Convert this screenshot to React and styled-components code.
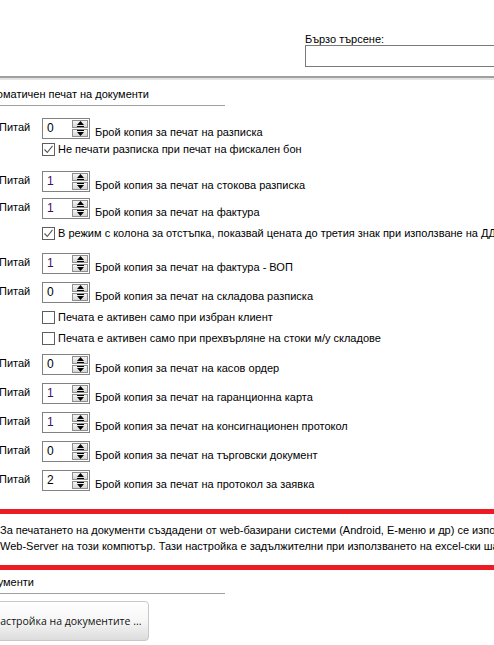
import React from 'react';
import styled, { createGlobalStyle } from 'styled-components';

const GlobalStyle = createGlobalStyle`
  html, body {
    margin: 0;
    padding: 0;
    background: #fff;
    overflow: hidden;
  }
  body {
    font-family: "Liberation Sans", Arial, sans-serif;
    font-size: 11px;
    color: #000;
  }
`;

const Page = styled.div`
  width: 494px;
  height: 645px;
  overflow: hidden;
`;

const Header = styled.div`
  display: flex;
  padding: 33px 0 9px 305px;
`;

const SearchBox = styled.div`
  display: flex;
  flex-direction: column;
  flex-shrink: 0;
  label {
    line-height: 12px;
    height: 12px;
  }
`;

const SearchInput = styled.input`
  width: 240px;
  height: 22px;
  box-sizing: border-box;
  border: 1px solid #7a7a7a;
  margin: 0;
  padding: 0 4px;
  font: inherit;
`;

const Rule = styled.div`
  height: 2px;
  background: #a0a0a0;
  border-bottom: 2px solid #e4e4e4;
`;

const Content = styled.div`
  margin-left: -21px;
`;

const Legend = styled.div`
  width: 246px;
  border-bottom: 1px solid #a0a0a0;
  padding: ${p => p.$top}px 0 4px 0;
  line-height: 13px;
  white-space: nowrap;
`;

const Row = styled.div`
  display: flex;
  align-items: flex-start;
  margin-top: ${p => p.$gap}px;
  height: 21px;
`;

const Ask = styled.span`
  width: 43px;
  padding-left: 20px;
  padding-top: 3px;
  line-height: 13px;
  flex-shrink: 0;
`;

const Spin = styled.div`
  position: relative;
  width: 48px;
  height: 21px;
  box-sizing: border-box;
  border: 1px solid #828282;
  background: #fff;
  flex-shrink: 0;
  display: flex;
  align-items: center;
`;

const SpinValue = styled.span`
  padding-left: 4px;
  line-height: 13px;
  font-size: 12px;
  color: ${p => (p.$purple ? '#3a1262' : '#000')};
`;

const SpinButtons = styled.div`
  position: absolute;
  right: 1px;
  top: 1px;
  bottom: 1px;
  width: 16px;
  display: flex;
  flex-direction: column;
  gap: 1px;
`;

const SpinBtn = styled.div`
  flex: 1;
  background: linear-gradient(#f4f4f4, #d6d6d6);
  border: 1px solid #8e8e8e;
  box-sizing: border-box;
  display: flex;
  align-items: center;
  justify-content: center;
`;

const RowLabel = styled.span`
  margin-left: 5px;
  padding-top: 8px;
  line-height: 13px;
  white-space: nowrap;
`;

const CheckRow = styled.label`
  display: flex;
  align-items: center;
  margin: ${p => p.$gap}px 0 0 63px;
  height: 14px;
  white-space: nowrap;
`;

const Box = styled.span`
  width: 13px;
  height: 13px;
  box-sizing: border-box;
  border: 1px solid #5e5e5e;
  background: #fff;
  margin-right: 3px;
  display: flex;
  align-items: center;
  justify-content: center;
  flex-shrink: 0;
`;

const RedNote = styled.div`
  margin-top: ${p => p.$gap}px;
  border-top: 5px solid #ed1c24;
  border-bottom: 5px solid #ed1c24;
  padding: 8px 0 11px 21px;
  line-height: 16px;
  white-space: nowrap;
`;

const ActionButton = styled.button`
  margin-top: 7px;
  width: 170px;
  height: 40px;
  border: 1px solid #c8c8c8;
  border-radius: 4px;
  background: linear-gradient(#ffffff 0%, #f6f6f6 50%, #dcdcdc 100%);
  font-family: "Open Sans", "Liberation Sans", sans-serif;
  font-size: 10.5px;
  color: #111;
  padding: 0 0 0 6px;
  white-space: nowrap;
`;

const Up = () => (
  <svg width="9" height="6" viewBox="0 0 9 6">
    <path d="M4.5 0 L8 4 L1 4 Z" fill="#000" />
    <rect x="1" y="5" width="7" height="1" fill="#000" />
  </svg>
);

const Down = () => (
  <svg width="9" height="6" viewBox="0 0 9 6">
    <rect x="1" y="0" width="7" height="1" fill="#000" />
    <path d="M1 2 L8 2 L4.5 6 Z" fill="#000" />
  </svg>
);

const Tick = () => (
  <svg width="11" height="11" viewBox="0 0 11 11">
    <path d="M1.5 5.5 L4.3 8.5 L9.5 1.8" fill="none" stroke="#555" strokeWidth="1.1" />
  </svg>
);

const SpinRow = ({ gap, value, label }) => (
  <Row $gap={gap}>
    <Ask>Питай</Ask>
    <Spin>
      <SpinValue $purple={value === '1'}>{value}</SpinValue>
      <SpinButtons>
        <SpinBtn><Up /></SpinBtn>
        <SpinBtn><Down /></SpinBtn>
      </SpinButtons>
    </Spin>
    <RowLabel>{label}</RowLabel>
  </Row>
);

const Check = ({ gap, checked, children }) => (
  <CheckRow $gap={gap}>
    <Box>{checked && <Tick />}</Box>
    {children}
  </CheckRow>
);

export default function App() {
  return (
    <Page>
      <GlobalStyle />
      <Header>
        <SearchBox>
          <label>Бързо търсене:</label>
          <SearchInput />
        </SearchBox>
      </Header>
      <Rule />
      <Content>
        <Legend $top={8}>Автоматичен печат на документи</Legend>
        <SpinRow gap={12} value="0" label="Брой копия за печат на разписка" />
        <Check gap={3} checked>Не печати разписка при печат на фискален бон</Check>
        <SpinRow gap={15} value="1" label="Брой копия за печат на стокова разписка" />
        <SpinRow gap={6} value="1" label="Брой копия за печат на фактура" />
        <Check gap={7} checked>В режим с колона за отстъпка, показвай цената до третия знак при използване на ДДС</Check>
        <SpinRow gap={13} value="1" label="Брой копия за печат на фактура - ВОП" />
        <SpinRow gap={8} value="0" label="Брой копия за печат на складова разписка" />
        <Check gap={7}>Печата е активен само при избран клиент</Check>
        <Check gap={7}>Печата е активен само при прехвърляне на стоки м/у складове</Check>
        <SpinRow gap={9} value="0" label="Брой копия за печат на касов ордер" />
        <SpinRow gap={8} value="1" label="Брой копия за печат на гаранционна карта" />
        <SpinRow gap={8} value="1" label="Брой копия за печат на консигнационен протокол" />
        <SpinRow gap={8} value="0" label="Брой копия за печат на търговски документ" />
        <SpinRow gap={8} value="2" label="Брой копия за печат на протокол за заявка" />
        <RedNote $gap={18}>
          За печатането на документи създадени от web-базирани системи (Android, E-меню и др) се използва
          <br />
          Web-Server на този компютър. Тази настройка е задължителни при използването на excel-ски шаблони.
        </RedNote>
        <Legend $top={6}>Документи</Legend>
        <ActionButton>Настройка на документите ...</ActionButton>
      </Content>
    </Page>
  );
}
